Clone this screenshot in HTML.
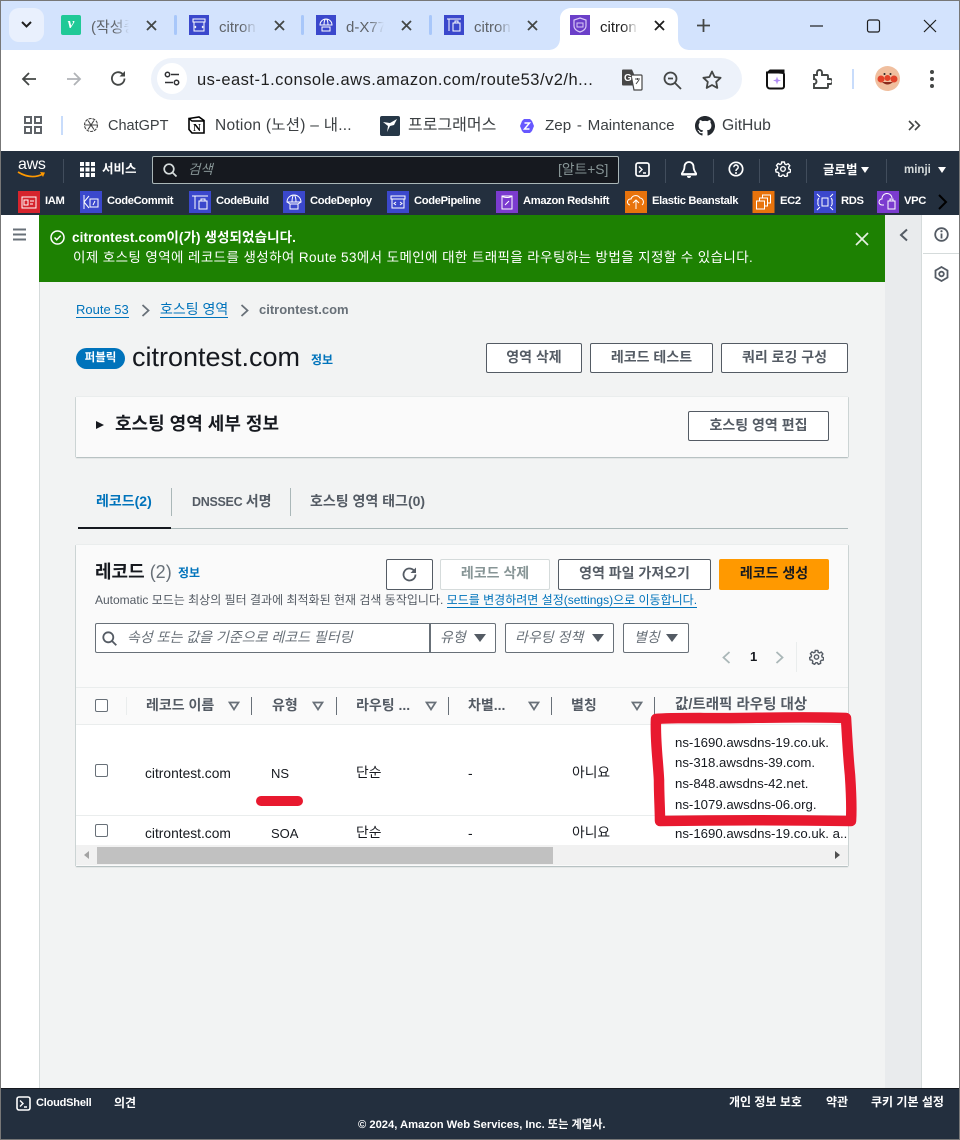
<!DOCTYPE html>
<html lang="ko"><head><meta charset="utf-8"><title>Route 53</title>
<style>
html,body{margin:0;padding:0;background:#fff}
body{width:960px;height:1140px;position:relative;overflow:hidden;font-family:"Liberation Sans","Noto Sans CJK KR",sans-serif;font-size:12px;color:#16191f}
div,svg,span.a,a{position:absolute}
.t{position:absolute;white-space:nowrap;line-height:20px;height:20px}
.b{font-weight:700}
.tab{font-size:15px;color:#5f6368;overflow:hidden;width:38px;-webkit-mask-image:linear-gradient(90deg,#000 60%,transparent);mask-image:linear-gradient(90deg,#000 60%,transparent)}
.sep{width:3px;height:20px;top:15px;background:#a8c7fa;border-radius:2px}
.bm{font-size:14.5px;color:#3c4043}
.w{color:#fff}
.fav{font-size:11.2px;color:#fff;font-weight:700;letter-spacing:-.35px}
.fi{width:22px;height:22px;top:191px}
.ndiv{width:1px;height:24px;top:159px;background:#414d5c}
.btn{box-sizing:border-box;border:1px solid #545b64;border-radius:2px;background:#fff;text-align:center;font-size:14px;font-weight:700;color:#545b64}
.th{font-size:14px;font-weight:700;color:#545b64}
.td{font-size:13.8px;color:#16191f}
.ns{font-size:13.2px;color:#16191f}
.cb{width:11px;height:11px;border:1px solid #687078;border-radius:2px;background:#fff}
.cd{width:1px;height:18px;top:697px;background:#687078}
.tri{width:0;height:0;border-left:6px solid transparent;border-right:6px solid transparent;border-top:8px solid #545b64}
.fl{font-size:14px;font-style:italic;color:#687078}
</style></head><body>

<!-- tab strip -->
<div style="left:0;top:0;width:960px;height:50px;background:#d3e3fd"></div>
<div style="left:9px;top:8px;width:35px;height:34px;background:#e9f0fd;border-radius:10px"></div>
<svg style="left:20px;top:20px" width="13" height="10"><path d="M2 2l4.500 4.500L11 2" fill="none" stroke="#1f1f1f" stroke-width="2"/></svg>

<div style="left:61px;top:15px;width:20px;height:20px;background:#20c997;border-radius:2px;color:#fff;font:italic 700 15px/19px 'Liberation Serif',serif;text-align:center">v</div>
<div class="t tab" style="left:91px;top:18px">(작성중</div>
<svg style="left:146px;top:20px" width="11" height="11"><path d="M1 1l9 9M10 1l-9 9" stroke="#444746" stroke-width="1.800"/></svg>
<div class="sep" style="left:174px"></div>

<svg style="left:189px;top:15px" width="20" height="20"><rect width="20" height="20" fill="#3b48cc"/><path d="M4 4h12v3H4zM5 7v9h10V7M7 11l-1 1 1 1M13 11l1 1-1 1" fill="none" stroke="#fff" stroke-width="1"/></svg>
<div class="t tab" style="left:219px;top:18px">citron</div>
<svg style="left:274px;top:20px" width="11" height="11"><path d="M1 1l9 9M10 1l-9 9" stroke="#444746" stroke-width="1.800"/></svg>
<div class="sep" style="left:301px"></div>

<svg style="left:316px;top:15px" width="20" height="20"><rect width="20" height="20" fill="#3b48cc"/><path d="M4 10a6 6 0 0 1 12 0zM8 10c0-4 1-6 2-6s2 2 2 6M6 12h8v4H6z" fill="none" stroke="#fff" stroke-width="1"/></svg>
<div class="t tab" style="left:346px;top:18px">d-X77</div>
<svg style="left:401px;top:20px" width="11" height="11"><path d="M1 1l9 9M10 1l-9 9" stroke="#444746" stroke-width="1.800"/></svg>
<div class="sep" style="left:429px"></div>

<svg style="left:444px;top:15px" width="20" height="20"><rect width="20" height="20" fill="#3b48cc"/><path d="M3 4h14M5 4v12M9 8h7v8H9zM11 8V6h3v2" fill="none" stroke="#fff" stroke-width="1"/></svg>
<div class="t tab" style="left:474px;top:18px">citron</div>
<svg style="left:527px;top:20px" width="11" height="11"><path d="M1 1l9 9M10 1l-9 9" stroke="#444746" stroke-width="1.800"/></svg>

<svg style="left:548px;top:7px" width="142" height="43"><path d="M0 43c8 0 12-5 12-12V12C12 5 17 1 24 1h94c7 0 12 4 12 11v19c0 7 4 12 12 12z" fill="#fff"/></svg>
<svg style="left:570px;top:15px" width="20" height="20"><rect width="20" height="20" fill="#6b3fc9"/><path d="M10 3l6 2v6c0 3-3 5-6 6-3-1-6-3-6-6V5z" fill="none" stroke="#d9c8f7" stroke-width="1.200"/><path d="M7 8h6v4H7z" fill="none" stroke="#d9c8f7"/></svg>
<div class="t tab" style="left:600px;top:18px;color:#1f1f1f">citron</div>
<svg style="left:654px;top:20px" width="11" height="11"><path d="M1 1l9 9M10 1l-9 9" stroke="#1f1f1f" stroke-width="1.800"/></svg>
<svg style="left:697px;top:19px" width="13" height="13"><path d="M6.500 0v13M0 6.500h13" stroke="#444746" stroke-width="1.800"/></svg>
<svg style="left:810px;top:19px" width="140" height="14"><path d="M0 7h13" stroke="#1f1f1f" stroke-width="1.200"/><rect x="57.500" y="1" width="12" height="12" rx="2" fill="none" stroke="#1f1f1f" stroke-width="1.200"/><path d="M114 1l12 12M126 1l-12 12" stroke="#1f1f1f" stroke-width="1.200"/></svg>

<!-- toolbar -->
<div style="left:0;top:50px;width:960px;height:101px;background:#fff;border-radius:10px 10px 0 0"></div>
<svg style="left:20px;top:70px" width="18" height="18"><path d="M16 9H3M9 3L3 9l6 6" fill="none" stroke="#444746" stroke-width="1.800"/></svg>
<svg style="left:65px;top:70px" width="18" height="18"><path d="M2 9h13M9 3l6 6-6 6" fill="none" stroke="#b0b3b7" stroke-width="1.800"/></svg>
<svg style="left:109px;top:69px" width="19" height="19"><path d="M15.500 9.500a6.300 6.300 0 1 1-2-4.600L15 6.500" fill="none" stroke="#444746" stroke-width="1.800"/><path d="M16 2v5.500h-5.500z" fill="#444746"/></svg>
<div style="left:151px;top:58px;width:591px;height:42px;background:#edf2fa;border-radius:21px"></div>
<div style="left:157px;top:63px;width:30px;height:31px;background:#fff;border-radius:50%"></div>
<svg style="left:164px;top:71px" width="16" height="16"><path d="M7 3.500h8M1 11.500h8" stroke="#303134" stroke-width="1.500"/><circle cx="3.500" cy="3.500" r="2.200" fill="none" stroke="#303134" stroke-width="1.500"/><circle cx="12.500" cy="11.500" r="2.200" fill="none" stroke="#303134" stroke-width="1.500"/></svg>
<div class="t" style="left:197px;top:70px;font-size:16.500px;color:#1f1f1f;letter-spacing:.48px">us-east-1.console.aws.amazon.com/route53/v2/h...</div>
<svg style="left:621px;top:69px" width="22" height="22"><path d="M1 1.500a1 1 0 0 1 1-1h9l7 16H2a1 1 0 0 1-1-1z" fill="#474747"/><path d="M10 6h10a1 1 0 0 1 1 1v13a1 1 0 0 1-1 1h-7z" fill="#fff" stroke="#474747" stroke-width="1.200"/><path d="M14 10h5M16.500 9v2M15 15l3-4" stroke="#474747" fill="none"/><text x="3" y="12" font-family="Liberation Sans" font-size="10" font-weight="700" fill="#fff">G</text></svg>
<svg style="left:663px;top:71px" width="19" height="19"><circle cx="7.500" cy="7.500" r="6" fill="none" stroke="#444746" stroke-width="1.800"/><path d="M12 12l6 6M5 7.500h5" stroke="#444746" stroke-width="1.800"/></svg>
<svg style="left:702px;top:70px" width="20" height="19"><path d="M10 1.500l2.600 5.500 6 .8-4.400 4.100 1.100 6L10 15l-5.300 2.900 1.100-6L1.400 7.800l6-.8z" fill="none" stroke="#444746" stroke-width="1.800" stroke-linejoin="round"/></svg>
<svg style="left:766px;top:69px" width="20" height="21"><path d="M1 3.500h15a2 2 0 0 1 2 2v12a2 2 0 0 1-2 2H4a3 3 0 0 1-3-3z" fill="#fff" stroke="#111" stroke-width="2"/><path d="M1 3.500L4 1h14v4" fill="#111" stroke="#111"/><path d="M11 7.500l1 3 3 1-3 1-1 3-1-3-3-1 3-1z" fill="#b18cf5"/></svg>
<svg style="left:811px;top:69px" width="21" height="20"><path d="M2 6h4V3.500a2.500 2.500 0 0 1 5 0V6h5a1 1 0 0 1 1 1v3h2a2.500 2.500 0 0 1 0 5h-2v3a1 1 0 0 1-1 1H3v-4a2.500 2.500 0 0 0 0-5V6z" fill="none" stroke="#444746" stroke-width="1.900"/></svg>
<div style="left:852px;top:69px;width:2px;height:20px;background:#c8dcfb"></div>
<svg style="left:875px;top:66px" width="25" height="25"><circle cx="12.500" cy="12.500" r="12.500" fill="#f0bf9f"/><circle cx="6" cy="13" r="3.500" fill="#e2432a"/><circle cx="19" cy="13" r="3.500" fill="#e2432a"/><circle cx="12.500" cy="12" r="3" fill="#e2432a"/><path d="M7 16q5.500 5 11 0" fill="#8a2a1c"/><circle cx="9.500" cy="8" r="1" fill="#222"/><circle cx="15.500" cy="8" r="1" fill="#222"/></svg>
<svg style="left:929px;top:69px" width="6" height="20"><circle cx="3" cy="3" r="2" fill="#444746"/><circle cx="3" cy="10" r="2" fill="#444746"/><circle cx="3" cy="17" r="2" fill="#444746"/></svg>

<!-- bookmarks -->
<svg style="left:24px;top:116px" width="18" height="18"><g fill="none" stroke="#5f6368" stroke-width="2"><rect x="1" y="1" width="6" height="6"/><rect x="11" y="1" width="6" height="6"/><rect x="1" y="11" width="6" height="6"/><rect x="11" y="11" width="6" height="6"/></g></svg>
<div style="left:61px;top:116px;width:2px;height:19px;background:#c8dcfb"></div>
<svg style="left:83px;top:117px" width="16" height="16"><g fill="none" stroke="#444" stroke-width="1.100"><circle cx="8" cy="8" r="6.500" stroke-dasharray="3 1"/><path d="M5 3.500l6 9M11 3.500l-6 9M2 8h12"/></g></svg>
<div class="t bm" style="left:108px;top:116px">ChatGPT</div>
<svg style="left:188px;top:116px" width="17" height="18"><path d="M1 2.500L11 1l5 3.500V17H4L1 13.500z" fill="#fff" stroke="#000" stroke-width="1.600"/><path d="M1 2.500L4 5h12" fill="none" stroke="#000" stroke-width="1.400"/><text x="5" y="15" font-family="Liberation Serif" font-size="11" font-weight="700">N</text></svg>
<div class="t bm" style="left:215px;top:116px;font-size:15.500px;letter-spacing:.25px">Notion (노션) – 내...</div>
<svg style="left:380px;top:116px" width="20" height="20"><rect width="20" height="20" rx="2" fill="#263747"/><path d="M3 6l7 1 7-4-3 6-4 1-3 6 1-6z" fill="#fff"/></svg>
<div class="t bm" style="left:408px;top:116px;font-size:16px">프로그래머스</div>
<svg style="left:519px;top:118px" width="16" height="16"><path d="M5 1h6l2 2 2 5-2 5-2 2H5l-2-2-2-5 2-5z" fill="#6758ff"/><path d="M5.500 5h5l-5 6h5" fill="none" stroke="#fff" stroke-width="1.500"/></svg>
<div class="t bm" style="left:545px;top:116px;font-size:15.200px;word-spacing:1.500px">Zep - Maintenance</div>
<svg style="left:695px;top:116px" width="20" height="20" viewBox="0 0 16 16"><path fill="#24292f" d="M8 0C3.580 0 0 3.580 0 8c0 3.540 2.290 6.530 5.470 7.590.4.070.55-.17.550-.38 0-.19-.01-.82-.01-1.490-2.010.37-2.530-.49-2.690-.94-.09-.23-.48-.94-.82-1.130-.28-.15-.68-.52-.01-.53.630-.01 1.080.58 1.230.82.720 1.210 1.870.87 2.330.66.070-.52.280-.87.510-1.070-1.780-.2-3.640-.89-3.640-3.950 0-.87.310-1.590.82-2.150-.08-.2-.36-1.020.08-2.120 0 0 .67-.21 2.200.82.640-.18 1.320-.27 2-.27s1.360.09 2 .27c1.530-1.040 2.200-.82 2.200-.82.440 1.100.16 1.920.08 2.120.51.560.82 1.270.82 2.150 0 3.070-1.870 3.750-3.650 3.950.29.25.54.73.54 1.480 0 1.070-.01 1.930-.01 2.200 0 .21.150.46.550.38A8.010 8.010 0 0 0 16 8c0-4.420-3.580-8-8-8z"/></svg>
<div class="t bm" style="left:722px;top:116px;font-size:15.700px">GitHub</div>
<svg style="left:908px;top:120px" width="13" height="11"><path d="M1 1l4.500 4.500L1 10M7 1l4.500 4.500L7 10" fill="none" stroke="#444746" stroke-width="1.600"/></svg>

<!-- window edge -->
<div style="left:0;top:0;width:960px;height:1px;background:#777"></div>
<div style="left:0;top:0;width:1px;height:1140px;background:#777"></div>
<div style="left:959px;top:0;width:1px;height:1140px;background:#777"></div>
<div style="left:0;top:1139px;width:960px;height:1px;background:#777"></div>

<!-- aws nav -->
<div style="left:1px;top:151px;width:958px;height:64px;background:#232f3e"></div>
<div class="t" style="left:18px;top:155px;font-size:16px;color:#fff;letter-spacing:-.3px">aws</div>
<svg style="left:17px;top:171px" width="31" height="9"><path d="M1 1q13 8 25 2" fill="none" stroke="#f90" stroke-width="1.700"/><path d="M23 1l5 .5-2 4.500z" fill="#f90"/></svg>
<div class="ndiv" style="left:63px"></div>
<svg style="left:80px;top:162px" width="15" height="15"><g fill="#fff"><rect width="4" height="4"/><rect x="5.500" width="4" height="4"/><rect x="11" width="4" height="4"/><rect y="5.500" width="4" height="4"/><rect x="5.500" y="5.500" width="4" height="4"/><rect x="11" y="5.500" width="4" height="4"/><rect y="11" width="4" height="4"/><rect x="5.500" y="11" width="4" height="4"/><rect x="11" y="11" width="4" height="4"/></g></svg>
<div class="t b w" style="left:102px;top:159px;font-size:12.500px">서비스</div>
<div style="left:152px;top:156px;width:465px;height:26px;background:#16191f;border:1px solid #aab7b8;border-radius:2px"></div>
<svg style="left:163px;top:163px" width="14" height="14"><circle cx="6" cy="6" r="4.800" fill="none" stroke="#d5dbdb" stroke-width="1.700"/><path d="M9.500 9.500l4 4" stroke="#d5dbdb" stroke-width="1.700"/></svg>
<div class="t" style="left:188px;top:160px;font-size:13.500px;font-style:italic;color:#879596">검색</div>
<div class="t" style="left:558px;top:160px;font-size:13.800px;color:#879596">[알트+S]</div>

<svg style="left:635px;top:162px" width="15" height="15"><rect x="1" y="1" width="13" height="13" rx="2" fill="none" stroke="#fff" stroke-width="1.700"/><path d="M4 4.500l3 3-3 3M8 11h3" fill="none" stroke="#fff" stroke-width="1.400"/></svg>
<div class="ndiv" style="left:665px"></div>
<svg style="left:681px;top:161px" width="16" height="17"><path d="M8 1a4.500 4.500 0 0 0-4.500 4.500c0 4-2 6-3 7.500h15c-1-1.500-3-3.500-3-7.500A4.500 4.500 0 0 0 8 1z" fill="none" stroke="#fff" stroke-width="1.800"/><path d="M.5 13h15v1.500H.5zM6 15h4a2 2 0 0 1-4 0z" fill="#fff"/></svg>
<div class="ndiv" style="left:713px"></div>
<svg style="left:728px;top:161px" width="16" height="16"><circle cx="8" cy="8" r="6.700" fill="none" stroke="#fff" stroke-width="1.700"/><path d="M5.800 6.200a2.200 2.200 0 1 1 3.400 1.800C8.400 8.500 8 9 8 10" fill="none" stroke="#fff" stroke-width="1.500"/><circle cx="8" cy="12" r="1" fill="#fff"/></svg>
<div class="ndiv" style="left:759px"></div>
<svg style="left:775px;top:161px" width="16" height="16" viewBox="0 0 16 16"><path d="M6.600 1h2.800l.4 2 1.500.7 1.800-1 1.700 2-1.200 1.600.3 1.700 1.800.8-.6 2.600-2 .1-1 1.300.4 2-2.500 1-1.100-1.700H7.300L6 15.800l-2.400-1.200.5-2-1-1.300-2-.2-.5-2.600 1.800-.7.3-1.700L1.500 4.500l1.700-2 1.800 1 1.500-.7z" fill="none" stroke="#fff" stroke-width="1.400" stroke-linejoin="round"/><circle cx="8" cy="8" r="2.300" fill="none" stroke="#fff" stroke-width="1.400"/></svg>
<div class="ndiv" style="left:806px"></div>
<div class="t b w" style="left:823px;top:160px;font-size:12.500px">글로벌</div>
<div class="tri" style="left:861px;top:167px;border-left-width:4.500px;border-right-width:4.500px;border-top:6px solid #fff"></div>
<div class="ndiv" style="left:886px"></div>
<div class="t b w" style="left:904px;top:160px;font-size:11.500px;color:#d5dbdb">minji</div>
<div class="tri" style="left:938px;top:167px;border-left-width:4.500px;border-right-width:4.500px;border-top:6px solid #fff"></div>

<!-- favorites -->
<svg class="fi" style="left:18px" viewBox="0 0 22 22"><rect width="22" height="22" fill="#d6242d"/><rect x="4" y="6" width="14" height="11" fill="none" stroke="#fff" stroke-width="1"/><path d="M6 9h4v5H6zM12 10h4M12 13h3" fill="none" stroke="#fff"/></svg>
<div class="t fav" style="left:45px;top:191px">IAM</div>
<svg class="fi" style="left:80px" viewBox="0 0 22 22"><rect width="22" height="22" fill="#3b48cc"/><path d="M4 4v14M4 11l5-6M4 11l5 6M10 8h8v8h-8zM13 14l2-4" fill="none" stroke="#fff"/></svg>
<div class="t fav" style="left:107px;top:191px">CodeCommit</div>
<svg class="fi" style="left:189px" viewBox="0 0 22 22"><rect width="22" height="22" fill="#3b48cc"/><path d="M3 5h16M6 5v13M10 10h8v8h-8zM12 10V8h4v2" fill="none" stroke="#fff"/></svg>
<div class="t fav" style="left:216px;top:191px">CodeBuild</div>
<svg class="fi" style="left:283px" viewBox="0 0 22 22"><rect width="22" height="22" fill="#3b48cc"/><path d="M4 11a7 7 0 0 1 14 0zM9 11c0-4 1-7 2-7s2 3 2 7M7 13h8v5H7zM4 11l3 2M18 11l-3 2" fill="none" stroke="#fff"/></svg>
<div class="t fav" style="left:310px;top:191px">CodeDeploy</div>
<svg class="fi" style="left:387px" viewBox="0 0 22 22"><rect width="22" height="22" fill="#3b48cc"/><path d="M4 5h14v3H4zM5 8v9h12V8M9 11l-2 1.500L9 14M13 11l2 1.500L13 14" fill="none" stroke="#fff"/></svg>
<div class="t fav" style="left:414px;top:191px">CodePipeline</div>
<svg class="fi" style="left:496px" viewBox="0 0 22 22"><rect width="22" height="22" fill="#7b3bcf"/><path d="M6 5h10v13H6zM6 5c2 2 8 2 10 0M9 14l4-4" fill="none" stroke="#fff"/></svg>
<div class="t fav" style="left:523px;top:191px">Amazon Redshift</div>
<svg class="fi" style="left:625px" viewBox="0 0 22 22"><rect width="22" height="22" fill="#e8730c"/><path d="M5 14a3 3 0 0 1 1-6 5 5 0 0 1 9-1 4 4 0 0 1 2 7M11 9v9M8 12l3-3 3 3" fill="none" stroke="#fff"/></svg>
<div class="t fav" style="left:652px;top:191px">Elastic Beanstalk</div>
<svg class="fi" style="left:752px;width:23px" viewBox="0 0 22 22"><rect width="22" height="22" fill="#e8730c"/><path d="M4 10h8v8H4zM7 10V7h8v8h-3M10 7V4h8v8h-3" fill="none" stroke="#fff"/></svg>
<div class="t fav" style="left:780px;top:191px">EC2</div>
<svg class="fi" style="left:814px" viewBox="0 0 22 22"><rect width="22" height="22" fill="#3b48cc"/><path d="M8 7h6v8H8zM5 7c-2 2-1 3-1 4s-1 2 1 4M17 7c2 2 1 3 1 4s1 2-1 4M3 3l3 3M19 3l-3 3M3 19l3-3M19 19l-3-3" fill="none" stroke="#fff"/></svg>
<div class="t fav" style="left:841px;top:191px">RDS</div>
<svg class="fi" style="left:877px" viewBox="0 0 22 22"><rect width="22" height="22" fill="#7b3bcf"/><path d="M7 14H5a3 3 0 0 1 0-6 5 5 0 0 1 10-1M11 10h7v8h-7zM13 10V8h3v2" fill="none" stroke="#fff"/></svg>
<div class="t fav" style="left:904px;top:191px">VPC</div>
<svg style="left:937px;top:194px" width="11" height="16"><path d="M2 1l7 7-7 7" fill="none" stroke="#000" stroke-width="2"/></svg>

<!-- console layout -->
<div style="left:1px;top:215px;width:38px;height:873px;background:#fff;border-right:1px solid #d5dbdb"></div>
<svg style="left:13px;top:228px" width="13" height="13"><path d="M0 1.500h13M0 6.500h13M0 11.500h13" stroke="#687078" stroke-width="2"/></svg>
<div style="left:40px;top:215px;width:845px;height:873px;background:#f2f3f3"></div>
<div style="left:885px;top:215px;width:37px;height:873px;background:#e9ebed;border-right:1px solid #d5dbdb;box-sizing:border-box"></div>
<div style="left:922px;top:215px;width:37px;height:873px;background:#fff"></div>
<div style="left:923px;top:253px;width:36px;height:1px;background:#d5dbdb"></div>
<svg style="left:899px;top:228px" width="10" height="14"><path d="M8 1.500L2 7l6 5.500" fill="none" stroke="#545b64" stroke-width="2"/></svg>
<svg style="left:934px;top:227px" width="15" height="15"><circle cx="7.500" cy="7.500" r="6.300" fill="none" stroke="#545b64" stroke-width="1.800"/><path d="M7.500 6.500v5" stroke="#545b64" stroke-width="1.800"/><circle cx="7.500" cy="4.200" r="1.100" fill="#545b64"/></svg>
<svg style="left:934px;top:266px" width="15" height="16"><path d="M7.500 1l6 3.500v7l-6 3.500-6-3.500v-7z" fill="none" stroke="#545b64" stroke-width="1.800"/><circle cx="7.500" cy="8" r="2.300" fill="none" stroke="#545b64" stroke-width="1.800"/></svg>

<!-- flash -->
<div style="left:39px;top:215px;width:846px;height:67px;background:#1d8102"></div>
<svg style="left:50px;top:230px" width="15" height="15"><circle cx="7.500" cy="7.500" r="6.500" fill="none" stroke="#fff" stroke-width="1.500"/><path d="M4.500 7.500l2.200 2.300 4-4.200" fill="none" stroke="#fff" stroke-width="1.500"/></svg>
<div class="t b w" style="left:72px;top:228px;font-size:13.500px;letter-spacing:.1px">citrontest.com이(가) 생성되었습니다.</div>
<div class="t w" style="left:73px;top:248px;font-size:13.500px;letter-spacing:.4px">이제 호스팅 영역에 레코드를 생성하여 Route 53에서 도메인에 대한 트래픽을 라우팅하는 방법을 지정할 수 있습니다.</div>
<svg style="left:855px;top:232px" width="14" height="14"><path d="M1 1l12 12M13 1L1 13" stroke="#e6f0e2" stroke-width="1.700"/></svg>

<!-- breadcrumbs -->
<div class="t" style="left:76px;top:300px;font-size:13px;color:#0073bb;height:17px;border-bottom:1px solid #0073bb;line-height:20px">Route 53</div>
<svg style="left:141px;top:304px" width="9" height="13"><path d="M1.500 1l6 5.500-6 5.500" fill="none" stroke="#687078" stroke-width="1.800"/></svg>
<div class="t" style="left:160px;top:299px;font-size:14px;color:#0073bb;height:18px;border-bottom:1px solid #0073bb">호스팅 영역</div>
<svg style="left:240px;top:304px" width="9" height="13"><path d="M1.500 1l6 5.500-6 5.500" fill="none" stroke="#687078" stroke-width="1.800"/></svg>
<div class="t b" style="left:259px;top:300px;font-size:13px;color:#687078">citrontest.com</div>

<!-- heading -->
<div style="left:76px;top:348px;width:49px;height:21px;background:#0073bb;border-radius:11px;color:#fff;text-align:center;font:700 11.500px/21px 'Liberation Sans','Noto Sans CJK KR',sans-serif">퍼블릭</div>
<div class="t" style="left:132px;top:347px;font-size:27px;color:#16191f">citrontest.com</div>
<div class="t" style="left:311px;top:350px;font-size:12px;color:#0073bb;font-weight:700">정보</div>
<div class="btn" style="left:486px;top:343px;width:96px;height:30px;line-height:26px">영역 삭제</div>
<div class="btn" style="left:590px;top:343px;width:123px;height:30px;line-height:26px">레코드 테스트</div>
<div class="btn" style="left:721px;top:343px;width:127px;height:30px;line-height:26px">쿼리 로깅 구성</div>

<!-- details -->
<div style="left:76px;top:397px;width:772px;height:60px;background:#fafafa;box-shadow:0 1px 1px 0 #aab7b8,1px 0 0 #d5dbdb,-1px 0 0 #d5dbdb,0 -1px 0 #eaeded"></div>
<div style="left:96px;top:421px;width:0;height:0;border-left:8px solid #16191f;border-top:4.500px solid transparent;border-bottom:4.500px solid transparent"></div>
<div class="t b" style="left:115px;top:414px;font-size:18px;color:#16191f">호스팅 영역 세부 정보</div>
<div class="btn" style="left:688px;top:411px;width:141px;height:30px;line-height:26px">호스팅 영역 편집</div>

<!-- tabs -->
<div class="t b" style="left:96px;top:491px;font-size:14px;color:#0073bb">레코드(2)</div>
<div style="left:171px;top:488px;width:1px;height:28px;background:#aab7b8"></div>
<div class="t b" style="left:192px;top:491px;font-size:12.500px;color:#545b64"><span style="letter-spacing:-.3px">DNSSEC</span> <span style="font-size:14px">서명</span></div>
<div style="left:290px;top:488px;width:1px;height:28px;background:#aab7b8"></div>
<div class="t b" style="left:310px;top:491px;font-size:14px;color:#545b64">호스팅 영역 태그(0)</div>
<div style="left:78px;top:528px;width:770px;height:1px;background:#aab7b8"></div>
<div style="left:78px;top:527px;width:93px;height:2px;background:#16191f"></div>

<!-- records panel -->
<div style="left:76px;top:545px;width:772px;height:321px;background:#fafafa;box-shadow:0 1px 1px 0 #aab7b8,1px 0 0 #d5dbdb,-1px 0 0 #d5dbdb,0 -1px 0 #eaeded"></div>
<div class="t b" style="left:95px;top:562px;font-size:18px;color:#16191f">레코드 <span style="font-weight:400;color:#687078">(2)</span></div>
<div class="t b" style="left:178px;top:563px;font-size:12px;color:#0073bb">정보</div>
<div class="t" style="left:95px;top:590px;font-size:12px;color:#545b64">Automatic 모드는 최상의 필터 결과에 최적화된 현재 검색 동작입니다. <span style="color:#0073bb;border-bottom:1px solid #0073bb">모드를 변경하려면 설정(settings)으로 이동합니다.</span></div>
<div class="btn" style="left:386px;top:559px;width:47px;height:31px"></div>
<svg style="left:401px;top:566px" width="17" height="17"><path d="M14.500 8.500a6 6 0 1 1-1.800-4.300L14.500 6" fill="none" stroke="#545b64" stroke-width="1.800"/><path d="M15 1.500V7H9.500z" fill="#545b64"/></svg>
<div class="btn" style="left:440px;top:559px;width:110px;height:31px;line-height:27px;border-color:#d5dbdb;color:#879596">레코드 삭제</div>
<div class="btn" style="left:558px;top:559px;width:153px;height:31px;line-height:27px">영역 파일 가져오기</div>
<div class="btn" style="left:719px;top:559px;width:110px;height:31px;line-height:27px;background:#ff9900;border-color:#ff9900;color:#16191f">레코드 생성</div>

<!-- filter -->
<div style="left:95px;top:623px;width:334px;height:28px;background:#fff;border:1px solid #687078;border-radius:2px 0 0 2px"></div>
<svg style="left:102px;top:631px" width="15" height="15"><circle cx="6.300" cy="6.300" r="5" fill="none" stroke="#545b64" stroke-width="1.800"/><path d="M10 10l4.300 4.300" stroke="#545b64" stroke-width="1.800"/></svg>
<div class="t fl" style="left:127px;top:627px">속성 또는 값을 기준으로 레코드 필터링</div>
<div style="left:430px;top:623px;width:65px;height:28px;background:#fff;border:1px solid #687078;border-left:0;border-radius:0 2px 2px 0"></div>
<div style="left:429px;top:623px;width:2px;height:30px;background:#687078"></div>
<div class="t fl" style="left:440px;top:627px">유형</div>
<div class="tri" style="left:474px;top:634px"></div>
<div style="left:505px;top:623px;width:107px;height:28px;background:#fff;border:1px solid #687078;border-radius:2px"></div>
<div class="t fl" style="left:515px;top:627px">라우팅 정책</div>
<div class="tri" style="left:592px;top:634px"></div>
<div style="left:623px;top:623px;width:64px;height:28px;background:#fff;border:1px solid #687078;border-radius:2px"></div>
<div class="t fl" style="left:634px;top:627px">별칭</div>
<div class="tri" style="left:666px;top:634px"></div>

<!-- pagination -->
<svg style="left:722px;top:651px" width="9" height="13"><path d="M7.500 1L1.500 6.500l6 5.500" fill="none" stroke="#aab7b8" stroke-width="1.800"/></svg>
<div class="t b" style="left:750px;top:647px;font-size:13px">1</div>
<svg style="left:775px;top:651px" width="9" height="13"><path d="M1.500 1l6 5.500-6 5.500" fill="none" stroke="#aab7b8" stroke-width="1.800"/></svg>
<div style="left:796px;top:642px;width:1px;height:30px;background:#eaeded"></div>
<svg style="left:809px;top:649px" width="15" height="16" viewBox="0 0 16 16"><path d="M6.600 1h2.800l.4 2 1.500.7 1.800-1 1.700 2-1.200 1.600.3 1.700 1.800.8-.6 2.600-2 .1-1 1.300.4 2-2.500 1-1.100-1.700H7.300L6 15.800l-2.400-1.200.5-2-1-1.300-2-.2-.5-2.600 1.800-.7.3-1.700L1.500 4.500l1.700-2 1.800 1 1.500-.7z" fill="none" stroke="#545b64" stroke-width="1.500" stroke-linejoin="round"/><circle cx="8" cy="8" r="2.300" fill="none" stroke="#545b64" stroke-width="1.500"/></svg>

<!-- table header -->
<div style="left:76px;top:687px;width:772px;height:1px;background:#eaeded"></div>
<div class="cb" style="left:95px;top:699px"></div>
<div class="cd" style="left:126px;background:#eaeded"></div>
<div class="t th" style="left:146px;top:695px">레코드 이름</div>
<svg style="left:228px;top:701px" width="12" height="10"><path d="M1.500 1.500h9L6 8.500z" fill="none" stroke="#687078" stroke-width="1.700"/></svg>
<div class="cd" style="left:251px"></div>
<div class="t th" style="left:272px;top:695px">유형</div>
<svg style="left:312px;top:701px" width="12" height="10"><path d="M1.500 1.500h9L6 8.500z" fill="none" stroke="#687078" stroke-width="1.700"/></svg>
<div class="cd" style="left:336px"></div>
<div class="t th" style="left:356px;top:695px">라우팅 ...</div>
<svg style="left:425px;top:701px" width="12" height="10"><path d="M1.500 1.500h9L6 8.500z" fill="none" stroke="#687078" stroke-width="1.700"/></svg>
<div class="cd" style="left:448px"></div>
<div class="t th" style="left:468px;top:695px">차별...</div>
<svg style="left:528px;top:701px" width="12" height="10"><path d="M1.500 1.500h9L6 8.500z" fill="none" stroke="#687078" stroke-width="1.700"/></svg>
<div class="cd" style="left:551px"></div>
<div class="t th" style="left:571px;top:695px">별칭</div>
<svg style="left:631px;top:701px" width="12" height="10"><path d="M1.500 1.500h9L6 8.500z" fill="none" stroke="#687078" stroke-width="1.700"/></svg>
<div class="cd" style="left:654px"></div>
<div class="t th" style="left:675px;top:695px;font-size:14.500px">값/트래픽 라우팅 대상</div>

<!-- rows -->
<div style="left:76px;top:724px;width:772px;height:1px;background:#eaeded"></div>
<div style="left:76px;top:725px;width:772px;height:90px;background:#fff"></div>
<div style="left:76px;top:815px;width:772px;height:1px;background:#eaeded"></div>
<div style="left:76px;top:816px;width:772px;height:31px;background:#fff"></div>
<div class="cb" style="left:95px;top:764px"></div>
<div class="t td" style="left:145px;top:764px">citrontest.com</div>
<div class="t td" style="left:271px;top:764px;font-size:13px">NS</div>
<div class="t td" style="left:356px;top:763px">단순</div>
<div class="t td" style="left:468px;top:764px">-</div>
<div class="t td" style="left:572px;top:763px">아니요</div>
<div class="t ns" style="left:675px;top:733px">ns-1690.awsdns-19.co.uk.</div>
<div class="t ns" style="left:675px;top:753px">ns-318.awsdns-39.com.</div>
<div class="t ns" style="left:675px;top:774px">ns-848.awsdns-42.net.</div>
<div class="t ns" style="left:675px;top:795px">ns-1079.awsdns-06.org.</div>
<div class="cb" style="left:95px;top:824px"></div>
<div class="t td" style="left:145px;top:824px">citrontest.com</div>
<div class="t td" style="left:271px;top:824px;font-size:13px">SOA</div>
<div class="t td" style="left:356px;top:823px">단순</div>
<div class="t td" style="left:468px;top:824px">-</div>
<div class="t td" style="left:572px;top:823px">아니요</div>
<div class="t ns" style="left:675px;top:824px;width:173px;overflow:hidden">ns-1690.awsdns-19.co.uk. a..</div>

<!-- scrollbar -->
<div style="left:76px;top:845px;width:772px;height:20px;background:#f1f1f1"></div>
<div style="left:97px;top:847px;width:456px;height:17px;background:#c1c1c1"></div>
<div style="left:84px;top:851px;width:0;height:0;border-right:5px solid #a3a3a3;border-top:4.500px solid transparent;border-bottom:4.500px solid transparent"></div>
<div style="left:835px;top:851px;width:0;height:0;border-left:5px solid #505050;border-top:4.500px solid transparent;border-bottom:4.500px solid transparent"></div>

<!-- annotation -->
<svg style="left:640px;top:700px" width="225" height="140"><path d="M16 19C15 40 18 60 19 80C19 95 20 110 20 121C80 120 150 120 211 121C212 105 211 90 210 75C208 55 207 35 206 18C150 16 100 19 60 18C40 18 25 18 16 19Z" fill="none" stroke="#e8192f" stroke-width="10.500" stroke-linejoin="round" stroke-linecap="round"/></svg>
<svg style="left:250px;top:790px" width="60" height="20"><path d="M11 11H48" stroke="#e8192f" stroke-width="10" stroke-linecap="round"/></svg>

<!-- footer -->
<div style="left:1px;top:1088px;width:958px;height:51px;background:#232f3e;border-top:1px solid #16191f;box-sizing:border-box"></div>
<svg style="left:16px;top:1096px" width="15" height="15"><rect x="1" y="1" width="13" height="13" rx="2" fill="none" stroke="#fff" stroke-width="1.600"/><path d="M4 4.500l3 3-3 3M8 11h3" fill="none" stroke="#fff" stroke-width="1.400"/></svg>
<div class="t b" style="left:36px;top:1093px;font-size:11px;color:#fff;letter-spacing:-.2px">CloudShell</div>
<div class="t b" style="left:114px;top:1093px;font-size:12px;color:#fff">의견</div>
<div class="t b" style="left:729px;top:1092px;font-size:12px;color:#fff">개인 정보 보호</div>
<div class="t b" style="left:826px;top:1092px;font-size:12px;color:#fff">약관</div>
<div class="t b" style="left:871px;top:1092px;font-size:12px;color:#fff">쿠키 기본 설정</div>
<div class="t b" style="left:358px;top:1115px;font-size:11.200px;color:#fff">© 2024, Amazon Web Services, Inc. 또는 계열사.</div>

</body></html>
